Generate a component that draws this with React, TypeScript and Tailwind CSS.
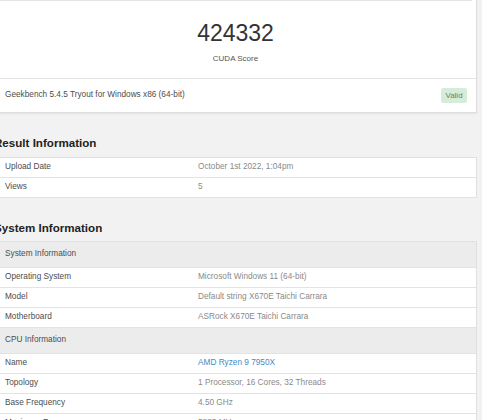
import React from "react";

type Row = { label: string; value: string; link?: boolean };

function DataRow({ label, value, link }: Row) {
  return (
    <div className="flex h-[20px] items-center border-b border-[#e3e3e3] bg-white">
      <div className="w-[203px] pl-[10px] text-[#4d4d4d]">{label}</div>
      <div className={link ? "text-[#3f8bc6]" : "text-[#8a8a8a]"}>{value}</div>
    </div>
  );
}

function HeaderRow({ label }: { label: string }) {
  return (
    <div className="flex h-[26px] items-center border-b border-[#e3e3e3] bg-[#ececec] pl-[10px] text-[#4d4d4d]">
      {label}
    </div>
  );
}

export default function App() {
  return (
    <div className="h-[420px] w-[482px] overflow-hidden bg-[#f2f2f2] font-['Liberation_Sans',Arial,sans-serif] text-[8.25px]">
      <div className="ml-[-6px] w-[483px]">
        <div className="mt-[-8px] border border-t-0 border-[#dedede] bg-white shadow-[0_1px_2px_rgba(0,0,0,0.06)]">
          <div className="mr-[4px] h-[9px] border-b border-[#e4e4e4]" />
          <div className="flex h-[77px] flex-col items-center pt-[20px]">
            <div className="text-[23px] leading-[24px] text-[#333333]">424332</div>
            <div className="mt-[9px] text-[8px] leading-[10px] text-[#555555]">CUDA Score</div>
          </div>
          <div className="flex h-[34px] items-center justify-between border-t border-[#e4e4e4] pl-[10px] pr-[9px]">
            <span className="text-[#4d4d4d]">Geekbench 5.4.5 Tryout for Windows x86 (64-bit)</span>
            <span className="flex h-[15px] w-[26px] items-center justify-center rounded-[2px] bg-[#d6ecdb] text-[8px] text-[#5d8766]">
              Valid
            </span>
          </div>
        </div>

        <h2 className="mb-[8px] mt-[23px] text-[11.6px] font-bold leading-[13px] text-[#222222]">Result Information</h2>
        <div className="border border-b-0 border-[#e0e0e0]">
          <DataRow label="Upload Date" value="October 1st 2022, 1:04pm" />
          <DataRow label="Views" value="5" />
        </div>

        <h2 className="mb-[7px] mt-[23px] text-[11.6px] font-bold leading-[13px] text-[#222222]">System Information</h2>
        <div className="border border-b-0 border-[#e0e0e0]">
          <HeaderRow label="System Information" />
          <DataRow label="Operating System" value="Microsoft Windows 11 (64-bit)" />
          <DataRow label="Model" value="Default string X670E Taichi Carrara" />
          <DataRow label="Motherboard" value="ASRock X670E Taichi Carrara" />
          <HeaderRow label="CPU Information" />
          <DataRow label="Name" value="AMD Ryzen 9 7950X" link />
          <DataRow label="Topology" value="1 Processor, 16 Cores, 32 Threads" />
          <DataRow label="Base Frequency" value="4.50 GHz" />
          <DataRow label="Maximum Frequency" value="5883 MHz" />
        </div>
      </div>
    </div>
  );
}
